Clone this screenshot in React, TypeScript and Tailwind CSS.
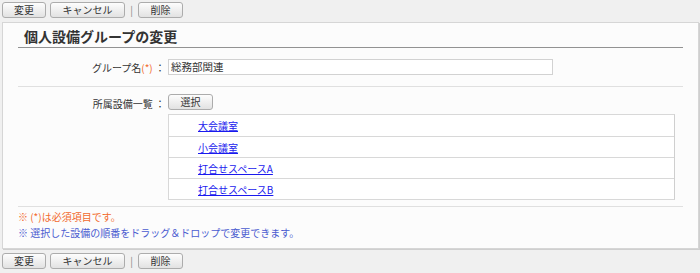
const font = { fontFamily: '"Noto Sans CJK JP", "Noto Sans", sans-serif' };

const items = ["大会議室", "小会議室", "打合せスペースA", "打合せスペースB"];

function Btn({ label, w }: { label: string; w: string }) {
  return (
    <button
      className={`h-[16px] ${w} flex items-center justify-center rounded-[3px] border border-[#acacac] bg-gradient-to-b from-[#fdfdfd] to-[#e2e2e2] text-[10px] leading-none text-[#333]`}
    >
      {label}
    </button>
  );
}

function Toolbar() {
  return (
    <div className="flex items-center h-[20px] pl-[2px]">
      <Btn label="変更" w="w-[44px]" />
      <div className="w-[4px]" />
      <Btn label="キャンセル" w="w-[75px]" />
      <span className="w-[13px] text-center text-[10px] text-[#888] leading-none">|</span>
      <Btn label="削除" w="w-[45px]" />
    </div>
  );
}

export default function App() {
  return (
    <div className="w-[700px] h-[273px] bg-[#f0f0f0] text-[#333] overflow-hidden" style={font}>
      <div className="pt-[0px]">
        <Toolbar />
      </div>

      <div className="ml-[2px] mt-[2px] w-[697px] h-[227px] bg-[#fcfcfc] border border-[#d6d6d6] shadow-[1px_1px_0_#cfcfcf] px-[15px]">
        <div className="h-[25px] border-b border-[#929292] pl-[6px] pt-[5px] text-[14px] font-bold leading-[16px] text-[#333]">
          個人設備グループの変更
        </div>

        <div className="flex items-center h-[38px]">
          <div className="w-[150px] text-right text-[10px] pr-[3px]">
            グループ名<span className="text-[#f26a2e]">(*)</span> ：
          </div>
          <div className="w-[385px] h-[16px] border border-[#d2d2d2] bg-white flex items-center pl-[2px] text-[10.5px]">
            総務部関連
          </div>
        </div>

        <div className="border-t border-[#e0e0e0]" />

        <div className="flex pt-[7px]">
          <div className="w-[150px] text-right text-[10px] pr-[3px] pt-[2px]">所属設備一覧 ：</div>
          <div>
            <Btn label="選択" w="w-[45px]" />
            <div className="mt-[4px] w-[507px] border border-[#d8d8d8] border-r-[#cfcfcf] bg-white">
              {items.map((t, i) => (
                <div
                  key={t}
                  className={`h-[21px] flex items-center pl-[29px] text-[10px] ${i > 0 ? "border-t border-[#d8d8d8]" : ""}`}
                >
                  <a className="text-[#1a1aee] underline">{t}</a>
                </div>
              ))}
            </div>
          </div>
        </div>

        <div className="mt-[6px] border-t border-[#e0e0e0]" />

        <div className="pt-[2px] text-[10px] leading-[16px]">
          <div className="text-[#f26a2e]">※ (*)は必須項目です。</div>
          <div className="text-[#4a5bd0]">※ 選択した設備の順番をドラッグ＆ドロップで変更できます。</div>
        </div>
      </div>

      <div className="mt-[2px]">
        <Toolbar />
      </div>
    </div>
  );
}
